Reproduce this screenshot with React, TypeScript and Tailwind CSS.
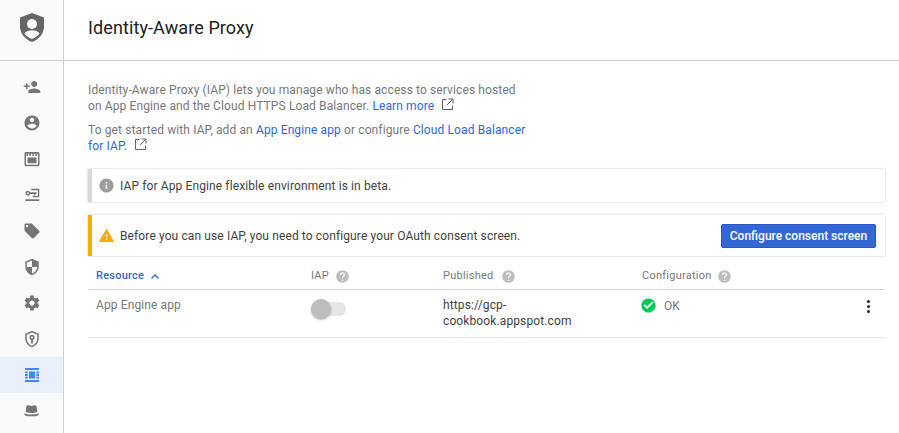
import React from "react";

const G = "#757575";

function Ico({ d, size = 18, color = G, vb = "0 0 24 24", className = "" }: { d: string; size?: number; color?: string; vb?: string; className?: string }) {
  return (
    <svg width={size} height={size} viewBox={vb} fill={color} fillRule="evenodd" className={"block shrink-0 " + className}>
      <path d={d} />
    </svg>
  );
}

const icons = [
  "M15 12c2.21 0 4-1.79 4-4s-1.79-4-4-4-4 1.79-4 4 1.79 4 4 4zm-9-2V7H4v3H1v2h3v3h2v-3h3v-2H6zm9 4c-2.67 0-8 1.34-8 4v2h16v-2c0-2.66-5.33-4-8-4z",
  "M12 2C6.48 2 2 6.48 2 12s4.48 10 10 10 10-4.48 10-10S17.52 2 12 2zm0 3c1.66 0 3 1.34 3 3s-1.34 3-3 3-3-1.34-3-3 1.34-3 3-3zm0 14.2c-2.5 0-4.71-1.28-6-3.22.03-1.99 4-3.08 6-3.08 1.99 0 5.97 1.09 6 3.08-1.29 1.94-3.5 3.22-6 3.22z",
  "M4 2.500h16c1.100 0 2 .9 2 2v15c0 1.100-.9 2-2 2H4c-1.100 0-2-.9-2-2v-15c0-1.100.9-2 2-2zm0 2.500v14.500h16V5h-1.500v3h-2V5h-2v3h-2V5h-2v3h-2V5h-2v3h-2V5zM6 10h12v7.500H6z",
  "M11 3.600h10.700V15H13v-1.700h6.800V5.500H11zM6.500 6.200a3.300 3.300 0 0 1 3.100 2.200H18v2.200h-1.500v2h-2v-2H9.600A3.300 3.300 0 1 1 6.500 6.200zm0 2.100a1.200 1.200 0 1 0 0 2.400 1.200 1.200 0 0 0 0-2.400zM3 17.500h18.700V20H3z",
  "M21.41 11.58l-9-9C12.05 2.22 11.55 2 11 2H4c-1.1 0-2 .9-2 2v7c0 .55.22 1.05.59 1.42l9 9c.36.36.86.58 1.41.58.55 0 1.05-.22 1.41-.59l7-7c.37-.36.59-.86.59-1.41 0-.55-.23-1.06-.59-1.42zM5.500 7C4.670 7 4 6.330 4 5.500S4.670 4 5.500 4 7 4.670 7 5.500 6.330 7 5.500 7z",
  "M12 1L3 5v6c0 5.55 3.84 10.74 9 12 5.160-1.260 9-6.450 9-12V5l-9-4zm0 10.990h7c-.53 4.120-3.280 7.790-7 8.940V12H5V6.300l7-3.110v8.800z",
  "M19.430 12.980c.04-.32.07-.64.07-.98s-.03-.66-.07-.98l2.110-1.650c.19-.15.24-.42.12-.64l-2-3.460c-.12-.22-.39-.3-.61-.22l-2.490 1c-.52-.4-1.080-.73-1.690-.98l-.38-2.650C14.460 2.180 14.250 2 14 2h-4c-.25 0-.46.18-.49.42l-.38 2.650c-.61.25-1.170.59-1.690.98l-2.490-1c-.23-.09-.49 0-.61.22l-2 3.460c-.13.22-.07.49.12.64l2.110 1.650c-.04.32-.07.65-.07.98s.03.66.07.98l-2.110 1.650c-.19.15-.24.42-.12.64l2 3.460c.12.22.39.3.61.22l2.490-1c.52.4 1.080.73 1.690.98l.38 2.650c.03.24.24.42.49.42h4c.25 0 .46-.18.49-.42l.38-2.650c.61-.25 1.170-.59 1.690-.98l2.490 1c.23.09.49 0 .61-.22l2-3.460c.12-.22.07-.49-.12-.64l-2.110-1.650zM12 15.500c-1.930 0-3.500-1.570-3.500-3.500s1.570-3.500 3.500-3.500 3.500 1.570 3.500 3.500-1.570 3.500-3.500 3.500z",
  "M12 1L3 5v6c0 5.550 3.840 10.740 9 12 5.160-1.260 9-6.450 9-12V5l-9-4zm0 2.200l7 3.100V11c0 4.500-3 8.800-7 10-4-1.200-7-5.500-7-10V6.300l7-3.100zM12 6.500a3.500 3.500 0 0 0-1.200 6.790V18h2.400v-4.710A3.500 3.500 0 0 0 12 6.500zm0 2.200a1.300 1.300 0 1 1 0 2.600 1.300 1.300 0 0 1 0-2.600z",
  "",
  "",
];

const Info = "M12 2C6.480 2 2 6.480 2 12s4.480 10 10 10 10-4.480 10-10S17.520 2 12 2zm1 15h-2v-6h2v6zm0-8h-2V7h2v2z";
const Help = "M12 2C6.480 2 2 6.480 2 12s4.480 10 10 10 10-4.480 10-10S17.520 2 12 2zm1 17h-2v-2h2v2zm2.070-7.750l-.9.920C13.450 12.900 13 13.500 13 15h-2v-.5c0-1.100.45-2.100 1.170-2.830l1.240-1.260c.37-.36.59-.86.59-1.410 0-1.100-.9-2-2-2s-2 .9-2 2H8c0-2.210 1.790-4 4-4s4 1.790 4 4c0 .88-.36 1.680-.93 2.250z";
const Warn = "M1 21h22L12 2 1 21zm12-3h-2v-2h2v2zm0-4h-2v-4h2v4z";
const Check = "M12 2C6.480 2 2 6.480 2 12s4.480 10 10 10 10-4.480 10-10S17.520 2 12 2zm-2 15l-5-5 1.800-1.800L10 13.400l7.200-7.200L19 8l-9 9z";

function Ext() {
  return (
    <svg width="13" height="13" viewBox="0 0 13 13" fill="none" stroke="#5f6368" strokeWidth="1" className="ml-[7px] inline-block align-[-1px]">
      <path d="M5.500 1.500H1.500v10h10v-4M7.500 1H12v4.500M12 1L6 7" />
    </svg>
  );
}

function Q() {
  return <Ico d={Help} size={15} color="#bdbdbd" />;
}

export default function App() {
  return (
    <div className="flex h-[433px] w-[899px] overflow-hidden bg-white text-[12px] leading-4 tracking-[0.115px] text-[#787878]" style={{ fontFamily: "Roboto, sans-serif" }}>
      <aside className="flex w-[64px] shrink-0 flex-col border-r border-[#cfcfcf] bg-[#fafafa]">
        <div className="flex h-[61px] shrink-0 items-center justify-center border-b border-[#cfcfcf] pb-[5px]">
          <svg width="24" height="29" viewBox="0 0 24 29" className="block">
            <path d="M12 0L24 4.500V13.500C24 20.500 19 26.500 12 29 5 26.500 0 20.500 0 13.500V4.500z" fill="#666666" />
            <circle cx="12" cy="11" r="5" fill="#fafafa" />
            <path d="M4.500 20.500C6 18 9 17.300 12 17.300S18 18 19.500 20.500C18 23 15 25 12 26 9 25 6 23 4.500 20.500z" fill="#fafafa" />
          </svg>
        </div>
        <div className="flex flex-col pt-2">
          {icons.map((d, i) =>
            i === 8 ? (
              <div key={i} className="flex h-9 items-center justify-center bg-[#e8f0fb]">
                <svg width="14" height="14" viewBox="0 0 14 14" fill="#4285f4" className="block">
                  <path d="M0 0h14v2H0zM0 12h14v2H0zM4 3.500h6v7H4zM0 3.500h2.800v1.800H0zM11.200 3.500H14v1.800h-2.800zM0 6.100h2.800v1.800H0zM11.200 6.100H14v1.800h-2.800zM0 8.700h2.800v1.800H0zM11.200 8.700H14v1.800h-2.800z" />
                </svg>
              </div>
            ) : i === 9 ? (
              <div key={i} className="flex h-9 items-center justify-center">
                <svg width="15" height="12" viewBox="0 0 15 12" fill="#757575" className="block">
                  <path d="M3.800.3C5 .3 5.600 1 7.500 1S10 .3 11.200.3c1 0 1.300.8 1.500 1.700l.6 5C11 7.800 9 8 7.500 8S4 7.800 1.700 7l.6-5C2.500 1.100 2.800.3 3.800.3z" />
                  <path d="M0 8.200C2 9 4 9.500 7.500 9.500S13 9 15 8.200C15 10 13 11.300 11 11.300H4C2 11.300 0 10 0 8.200z" />
                </svg>
              </div>
            ) : (
              <div key={i} className="flex h-9 items-center justify-center">
                <Ico d={d} />
              </div>
            )
          )}
        </div>
      </aside>

      <main className="flex min-w-0 flex-1 flex-col">
        <header className="flex h-[61px] shrink-0 items-center border-b border-[#cfcfcf] pb-[4px] pl-6 text-[18px] tracking-[0.1px] text-[#212121]">
          Identity-Aware Proxy
        </header>
        <div className="flex flex-col pl-6 pr-[14px] pt-[21px]">
          <p className="w-[440px]">
            Identity-Aware Proxy (IAP) lets you manage who has access to services hosted on App Engine and the Cloud HTTPS Load Balancer.{" "}
            <span className="text-[#3367d6]">Learn more</span>
            <Ext />
          </p>
          <p className="mt-[8px] w-[440px]">
            To get started with IAP, add an <span className="text-[#3367d6]">App Engine app</span> or configure{" "}
            <span className="text-[#3367d6]">Cloud Load Balancer</span>{" "}
            <span className="text-[#3367d6]">for IAP.</span>
            <Ext />
          </p>

          <div className="mt-[15px] flex h-[33px] items-center gap-[5px] border-l-4 border-[#d8d8d8] bg-white pl-[6px] text-[#424242] shadow-[0_0_2px_rgba(0,0,0,0.25)]">
            <Ico d={Info} size={17} color="#9e9e9e" />
            <span>IAP for App Engine flexible environment is in beta.</span>
          </div>

          <div className="mt-[13px] flex h-[41px] items-center justify-between border-l-4 border-[#f9ab00] bg-white pl-[6px] pr-[9px] text-[#424242] shadow-[0_0_2px_rgba(0,0,0,0.25)]">
            <div className="flex items-center gap-[5px]">
              <Ico d={Warn} size={17} color="#f9ab00" />
              <span>Before you can use IAP, you need to configure your OAuth consent screen.</span>
            </div>
            <div className="flex h-6 w-[155px] items-center justify-center rounded-[2px] border border-[#2a56c6] bg-[#3367d6] font-medium tracking-normal text-white">
              Configure consent screen
            </div>
          </div>

          <div className="mt-[11px] flex h-[23px] items-start border-b border-[#d6d6d6] pl-2 pt-[1px] text-[11px] tracking-[0.25px]">
            <div className="flex w-[215px] items-center gap-[6px] font-medium text-[#3367d6]">
              Resource
              <svg width="10" height="7" viewBox="0 0 10 7" fill="none" stroke="#3367d6" strokeWidth="1.300" className="block">
                <path d="M1.500 5.500L5 2l3.500 3.500" />
              </svg>
            </div>
            <div className="flex w-[132px] items-center gap-[6px]">
              IAP <Q />
            </div>
            <div className="flex w-[199px] items-center gap-[7px]">
              Published <Q />
            </div>
            <div className="flex items-center gap-[5px]">
              Configuration <Q />
            </div>
          </div>

          <div className="relative flex h-[48px] items-start border-b border-[#e4e4e4] pl-2 pt-[7px]">
            <div className="w-[215px]">App Engine app</div>
            <div className="w-[132px] pt-[1px]">
              <div className="relative mt-[1px] h-5 w-[35px]">
                <div className="absolute left-[4px] top-[3px] h-[14px] w-[31px] rounded-full bg-[#e5e5e5]" />
                <div className="absolute left-0 top-0 h-5 w-5 rounded-full bg-[#bdbdbd] shadow-[0_1px_2px_rgba(0,0,0,0.3)]" />
              </div>
            </div>
            <div className="w-[199px] text-[#424242]">
              <div className="w-[150px]">https://gcp-cookbook.appspot.com</div>
            </div>
            <div className="-ml-[2px] flex items-center gap-[7px]">
              <Ico d={Check} size={17} color="#00c853" />
              <span>OK</span>
            </div>
            <div className="absolute right-[15px] top-[10px] flex flex-col gap-[2px]">
              <span className="h-[3px] w-[3px] rounded-full bg-[#212121]" />
              <span className="h-[3px] w-[3px] rounded-full bg-[#212121]" />
              <span className="h-[3px] w-[3px] rounded-full bg-[#212121]" />
            </div>
          </div>
        </div>
      </main>
    </div>
  );
}
